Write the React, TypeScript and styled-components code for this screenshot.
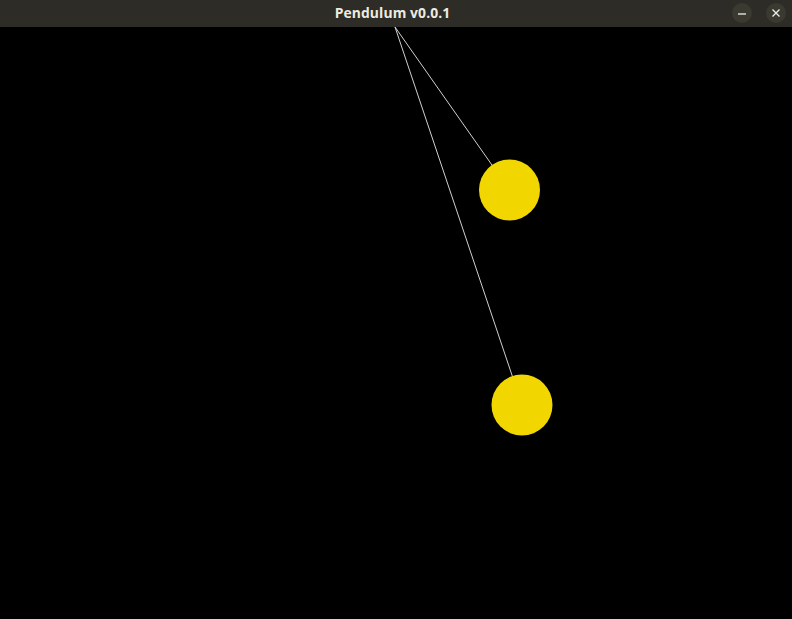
import * as React from 'react';
import styled, { createGlobalStyle } from 'styled-components';

const GlobalStyle = createGlobalStyle`
  html, body {
    margin: 0;
    padding: 0;
    background: #000;
  }
`;

const Window = styled.div`
  width: 792px;
  height: 619px;
  display: flex;
  flex-direction: column;
  background: #000;
  overflow: hidden;
`;

const TitleBar = styled.div`
  height: 27px;
  flex: none;
  display: grid;
  grid-template-columns: 1fr auto 1fr;
  align-items: center;
  background: #2d2c26;
  padding: 0 6px 0 0;
`;

const Title = styled.div`
  grid-column: 2;
  font-family: 'Open Sans', 'DejaVu Sans', sans-serif;
  font-weight: 700;
  font-size: 13.9px;
  color: #ecebe0;
  letter-spacing: 0.1px;
  margin-left: -1px;
  margin-top: -2px;
`;

const Controls = styled.div`
  grid-column: 3;
  justify-self: end;
  display: flex;
  gap: 14px;
  margin-top: -2px;
`;

const ControlButton = styled.div`
  width: 20px;
  height: 20px;
  border-radius: 50%;
  background: #3b3a30;
  display: flex;
  align-items: center;
  justify-content: center;
`;

const Canvas = styled.svg`
  flex: 1;
  display: block;
`;

const pivot = { x: 395, y: 0 };
const bobs = [
  { x: 509.5, y: 163, r: 30.5 },
  { x: 522, y: 378, r: 30.5 },
];

export default function App() {
  return (
    <>
      <GlobalStyle />
      <Window>
        <TitleBar>
          <Title>Pendulum v0.0.1</Title>
          <Controls>
            <ControlButton>
              <svg width="10" height="10" viewBox="0 0 10 10">
                <line x1="1" y1="6" x2="9" y2="6" stroke="#eeeeee" strokeWidth="1.3" />
              </svg>
            </ControlButton>
            <ControlButton>
              <svg width="10" height="10" viewBox="0 0 10 10">
                <path d="M1.5 1.5 L8.5 8.5 M8.5 1.5 L1.5 8.5" stroke="#eeeeee" strokeWidth="1.3" />
              </svg>
            </ControlButton>
          </Controls>
        </TitleBar>
        <Canvas width={792} height={592} viewBox="0 0 792 592">
          {bobs.map((b, i) => (
            <line key={'l' + i} x1={pivot.x} y1={pivot.y} x2={b.x} y2={b.y} stroke="#d0d0d0" strokeWidth={1} />
          ))}
          {bobs.map((b, i) => (
            <circle key={'c' + i} cx={b.x} cy={b.y} r={b.r} fill="#f2d600" />
          ))}
        </Canvas>
      </Window>
    </>
  );
}
